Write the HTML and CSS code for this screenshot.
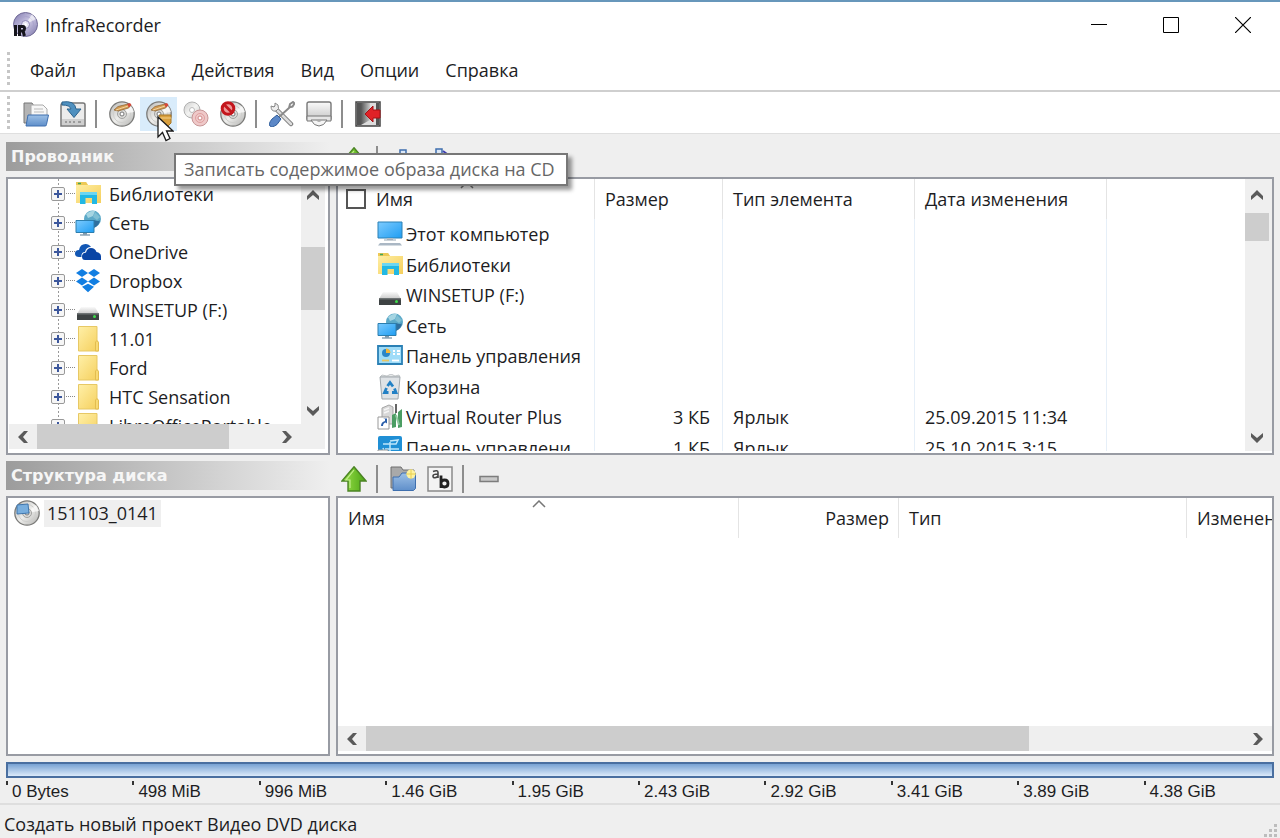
FILE: index.html
```html
<!DOCTYPE html>
<html lang="ru">
<head>
<meta charset="utf-8">
<title>InfraRecorder</title>
<link rel="stylesheet" href="styles.css">
</head>
<body>
<svg class="sprite" aria-hidden="true">
  <defs>
    <linearGradient id="gDisc" x1="0" y1="0" x2="1" y2="1"><stop offset="0" stop-color="#b4b4b2"/><stop offset=".5" stop-color="#eeeeec"/><stop offset="1" stop-color="#b0b0ae"/></linearGradient>
    <linearGradient id="gViolet" x1="0" y1="0" x2="1" y2="1"><stop offset="0" stop-color="#7d76ac"/><stop offset=".5" stop-color="#ccc8e4"/><stop offset="1" stop-color="#7a74a8"/></linearGradient>
    <linearGradient id="gBlue" x1="0" y1="0" x2="0" y2="1"><stop offset="0" stop-color="#9dc0e6"/><stop offset="1" stop-color="#5f8fca"/></linearGradient>
    <linearGradient id="gSky" x1="0" y1="0" x2="1" y2="1"><stop offset="0" stop-color="#7ccbff"/><stop offset="1" stop-color="#1f9df2"/></linearGradient>
    <linearGradient id="gFolder" x1="0" y1="0" x2="1" y2="1"><stop offset="0" stop-color="#fff0a8"/><stop offset="1" stop-color="#f5cf5c"/></linearGradient>
    <linearGradient id="gGreen" x1="0" y1="0" x2="1" y2="0"><stop offset="0" stop-color="#9be04a"/><stop offset="1" stop-color="#4ba514"/></linearGradient>
    <linearGradient id="gGrey" x1="0" y1="0" x2="0" y2="1"><stop offset="0" stop-color="#fafafa"/><stop offset="1" stop-color="#c9c9c9"/></linearGradient>
    <linearGradient id="gDark" x1="0" y1="0" x2="1" y2="0"><stop offset="0" stop-color="#555"/><stop offset="1" stop-color="#c8c8c8"/></linearGradient>
  </defs>
  <symbol id="disc" viewBox="0 0 26 26">
    <circle cx="13" cy="13" r="12.2" fill="url(#gDisc)" stroke="#7b7b79" stroke-width="1.3"/>
    <circle cx="13" cy="13" r="8.6" fill="none" stroke="#cfcfcd"/>
    <path d="M13 13 22 5A12 12 0 0 1 25 11Z" fill="#fff" opacity=".7"/>
    <circle cx="13" cy="13" r="4.500" fill="#dadad8" stroke="#a2a2a0"/>
    <circle cx="13" cy="13" r="2" fill="#fff" stroke="#777"/>
  </symbol>
  <symbol id="pencil" viewBox="0 0 26 26">
    <path d="m5 9 4-3.500L19 3l2.500 1.500-2 2.500L9 10Z" fill="#d29a50" stroke="#946b39" stroke-width=".8"/>
    <path d="m18 3 3-1 1.500 2-2.500 2.500Z" fill="#d6493a"/><path d="M7 9 19 5" stroke="#f3d5a0"/>
  </symbol>
  <symbol id="library" viewBox="0 0 26 26">
    <path d="M1 1h10l2 3h13v18H1Z" fill="url(#gFolder)"/><path d="M1 1h10l2 3H1Z" fill="#edc956"/><path d="M3 2.500h3" stroke="#3fa55b" stroke-width="1.500"/>
    <path d="M5 23V12.500Q5 11 6.500 11h14Q22 11 22 12.500V23h-5v-6h-6.500v6Z" fill="#22b8e4"/><path d="M5 14v-3h17v3Z" fill="#6cd6f1"/>
  </symbol>
  <symbol id="network" viewBox="0 0 26 26">
    <circle cx="17.500" cy="9" r="8.500" fill="#5ba9c8"/><path d="M11 4q5-4 9-3l-2 5-5 2Z" fill="#a5d5e2"/><path d="m20 2 5 5-3 3-4-3Z" fill="#7fbfd4"/><path d="M19 10q5 2 6 0-1 6-6 8Z" fill="#2f6f9f"/>
    <path d="M1 10.500h18v12H1Z" fill="url(#gSky)" stroke="#2c7eae"/><path d="M8 23h4v2H8Z" fill="#7f99ab"/><path d="M5 25h10" stroke="#8da5b6" stroke-width="1.500"/>
  </symbol>
  <symbol id="onedrive" viewBox="0 0 26 26">
    <path d="M4 18Q0 18 0 14.500T4 11Q5 5 10.500 5 14 5 16 8q-5 0-6 5-4 0-3.500 5Z" fill="#1257b4"/>
    <path d="M10 21q-3 0-3-3.500t4-4Q12 9 16 9q4 0 5.500 4 4.500 1 4.500 4.500V21Z" fill="#0a45a5"/>
  </symbol>
  <symbol id="dropbox" viewBox="0 0 26 26">
    <path d="m7 1 6 4-6 4-6-4Zm12 0 6 4-6 4-6-4ZM7 9.500l6 4-6 4-6-4Zm12 0 6 4-6 4-6-4ZM7 18.800l6-3 6 3-6 5.500Z" fill="#117ee2"/>
  </symbol>
  <symbol id="drive" viewBox="0 0 26 26">
    <path d="M6 10h14l4 7H2Z" fill="url(#gGrey)"/><path d="M2 16h22v7H2Z" fill="#3d4243"/><path d="M2 16h22v1.500H2Z" fill="#6e7374"/><circle cx="19.500" cy="19.500" r="1.500" fill="#3edc4b"/>
  </symbol>
  <symbol id="folder" viewBox="0 0 26 26">
    <path d="M3.500.5H22V14.500l1.500 2v8.500H3.500Z" fill="url(#gFolder)" stroke="#e7c865"/><path d="M20.500 25V16l1.500-1.500 1.500 2V25Z" fill="#f8da75" stroke="#e3bd50"/>
  </symbol>
  <symbol id="computer" viewBox="0 0 26 26">
    <path d="M1 1h24v16H1Z" fill="url(#gSky)" stroke="#2a80b5"/><path d="M10 17h6v2h-6Z" fill="#b3bdc5"/><path d="M7 19h12" stroke="#98a6b2"/><path d="M3 22h20l2 2.500H1Z" fill="#aab7c4"/>
  </symbol>
  <symbol id="control" viewBox="0 0 26 26">
    <path d="M1 3h24v18H1Z" fill="#9fdcf8" stroke="#2a80b5" stroke-width="1.800"/><circle cx="9" cy="10" r="4" fill="#2a86c8"/><path d="M9 10V5.500A4.500 4.500 0 0 1 13.500 10Z" fill="#f2b63a"/>
    <path d="M16 8h2m2 0h3m-7 3h2m2 0h3" stroke="#fff" stroke-width="2"/><path d="M5 17.500h7" stroke="#e9c663" stroke-width="1.800"/><path d="M15 17.500h7" stroke="#fff" stroke-width="1.800"/>
  </symbol>
  <symbol id="bin" viewBox="0 0 26 26">
    <path d="m3 3 2-2 5 1 4-2 4 2 4-1 1 2Z" fill="#e7e9ea" stroke="#b4b9bb" stroke-width=".8"/><path d="M3 3h20l-2 22H5Z" fill="#dfe3e6" stroke="#a1a8ad"/>
    <path d="m10.500 12 2.500-3.500 3 4m1.500 2 1.500 4h-4m-3.500 0H7.500l2-4.500" fill="none" stroke="#2381c5" stroke-width="2.800"/>
  </symbol>
  <symbol id="router" viewBox="0 0 26 26">
    <path d="M5 4 12 1l4 2v17H5Z" fill="#d8d8d8" stroke="#a6a6a6"/><path d="M7 6l5-2m-5 5 5-2" stroke="#f5f5f5" stroke-width="1.500"/><path d="M19 0v9" stroke="#555" stroke-width="1.800"/><path d="m15 11 4-2v14l-4 1Zm6-3 4-3v18l-4 1Z" fill="#4b9d63"/><path d="m19 11 3 10" stroke="#8fc9a0" stroke-width="2"/>
    <path d="M1 13h11v12H1Z" fill="#fff" stroke="#999"/><path d="M4 22q0-4 4-5V15l-2-.5h4v5l-1.500-1Q6 19 6 22Z" fill="#2c5faa"/>
  </symbol>
  <symbol id="shortcut" viewBox="0 0 26 26">
    <path d="M3 1h20q2 0 2 2v22H1V3q0-2 2-2Z" fill="#1f8fd5"/><path d="M6 9h13l2-4-8 1M8 14h14m-9-7v10m-7-4 3 8" fill="none" stroke="#bfe6fa" stroke-width="1.500"/><path d="M1 15h10v10H1Z" fill="#fff" stroke="#999"/><path d="M3 21q1-4 5-4v4" fill="none" stroke="#2c5faa" stroke-width="1.500"/>
  </symbol>
  <symbol id="up" viewBox="0 0 26 26">
    <path d="M13 .8 25 15h-6v10H7V15H1Z" fill="url(#gGreen)" stroke="#4b8424" stroke-width="1.400"/><path d="M13 4 5 14h4v8" fill="none" stroke="#c2ee8d" stroke-width="1.200"/>
  </symbol>
  <symbol id="newfolder" viewBox="0 0 26 26">
    <path d="M1 22V1h10l2 3h11v18Z" fill="#a9a9a9" stroke="#6f6f6f"/><path d="M3 24.500V11h6l3-4h13.500v15.500L23.500 24.500Z" fill="url(#gBlue)" stroke="#3f6fae"/><circle cx="21" cy="8" r="4.500" fill="#fff3a0"/><path d="M21 3v10m-5-5h10" stroke="#e8cf50"/>
  </symbol>
  <symbol id="chev" viewBox="0 0 14 14"><path d="M1 8 7 2l6 6v4L7 7l-6 5Z" fill="#5a5a5a"/></symbol>
</svg>

<div class="window">
  <header class="titlebar">
    <svg class="icon" viewBox="0 0 26 26"><circle cx="13.500" cy="12.500" r="12" fill="url(#gViolet)" stroke="#706a96"/><circle cx="13.500" cy="12.500" r="8" fill="none" stroke="#a9a3cc"/><path d="M13.500 12.500 20 2l4 5Z" fill="#fff" opacity=".6"/><circle cx="13.500" cy="12.500" r="4" fill="#e8e6f4" stroke="#8f89b6"/><circle cx="13.500" cy="12.500" r="1.500" fill="#fff"/><path d="M3.500 13v11M7.500 24V14.500h3.500q1.500 0 1.500 2t-1.500 2.500H8.500m2.500 0 1.500 5" fill="none" stroke="#16161c" stroke-width="3"/></svg>
    <h1 class="title">InfraRecorder</h1>
    <div class="controls">
      <button class="control" aria-label="Свернуть"><svg viewBox="0 0 16 16"><path d="M0 7.500h16" stroke="#000"/></svg></button>
      <button class="control" aria-label="Развернуть"><svg viewBox="0 0 16 16"><path d="M.5.500h15v15H.5Z" fill="none" stroke="#000"/></svg></button>
      <button class="control" aria-label="Закрыть"><svg viewBox="0 0 16 16"><path d="m0 0 16 16M16 0 0 16" stroke="#000" stroke-width="1.200"/></svg></button>
    </div>
  </header>

  <nav class="menubar">
    <span class="grip"></span>
    <button class="menu">Файл</button><button class="menu">Правка</button><button class="menu">Действия</button><button class="menu">Вид</button><button class="menu">Опции</button><button class="menu">Справка</button>
  </nav>

  <div class="toolbar main-tools">
    <span class="grip"></span>
    <button class="tool" aria-label="Открыть"><svg class="icon" viewBox="0 0 26 26"><path d="M1 22V2h8l2 3h7v17Z" fill="#b4b4b4" stroke="#777"/><path d="M8 4h12l4 4v10H8Z" fill="#f7f7f7" stroke="#aaa"/><path d="M11 8h9m-9 3h10" stroke="#bbb"/><path d="M5 14h20.500l-2 9.500Q23.500 25 22 25H3Z" fill="url(#gBlue)" stroke="#3f6fae"/></svg></button>
    <button class="tool" aria-label="Сохранить"><svg class="icon" viewBox="0 0 26 26"><path d="M1 25V5Q1 2 3 2h20q2 0 2 2v21Z" fill="#ececec" stroke="#777" stroke-width="1.500"/><path d="M2 18h22v6H2Z" fill="#cfcfcf"/><path d="M5 21h2m2 0h2m2 0h2m3 0h3" stroke="#8a8a8a" stroke-width="1.500"/><path d="M2 1q13-2 14 7h5l-7 8.500L7 8h4Q10 4 2 4Z" fill="#4f90bf" stroke="#2d648e"/></svg></button>
    <span class="sep"></span>
    <button class="tool" aria-label="Записать проект"><svg class="icon" viewBox="0 0 26 26"><use href="#disc"/><use href="#pencil"/></svg></button>
    <button class="tool active" aria-label="Записать образ" aria-describedby="tip"><svg class="icon" viewBox="0 0 26 26"><use href="#disc"/><use href="#pencil"/><path d="M13 14h12v8l-3 3h-4Z" fill="#d9a03f" stroke="#a87624"/><path d="M14 17h11" stroke="#f4d08a"/></svg></button>
    <button class="tool" aria-label="Копировать диск"><svg class="icon" viewBox="0 0 26 26"><g opacity=".65"><circle cx="9" cy="9" r="8" fill="url(#gDisc)" stroke="#888"/><circle cx="9" cy="9" r="2.500" fill="#fff" stroke="#999"/></g><circle cx="17" cy="17" r="8" fill="#efc9c9" stroke="#c79696"/><circle cx="17" cy="17" r="4.500" fill="none" stroke="#e09f9f"/><circle cx="17" cy="17" r="2" fill="#fff" stroke="#d08888"/></svg></button>
    <button class="tool" aria-label="Стереть диск"><svg class="icon" viewBox="0 0 26 26"><use href="#disc"/><circle cx="8" cy="7.500" r="5.800" fill="#e99" stroke="#c4161c" stroke-width="3"/><path d="m4.500 4 7 7" stroke="#c4161c" stroke-width="2.800"/></svg></button>
    <span class="sep"></span>
    <button class="tool" aria-label="Настройки"><svg class="icon" viewBox="0 0 26 26"><path d="m6 7 16 16" stroke="#777" stroke-width="4.500" stroke-linecap="round"/><path d="m6 7 16 16" stroke="#ddd" stroke-width="2.500" stroke-linecap="round"/><path d="M2 5q0 6 5 5 4-2 2-6L6 2v3L5 6Z" fill="#eee" stroke="#888"/><path d="m10 16 10-9 1-4 3-2 1.500 1.500-2 3-4 1" fill="none" stroke="#8a8a8a" stroke-width="2"/><path d="M3 18 8 14l4 4-4 5.500Q3 27 1 25T3 18Z" fill="#5c88c7" stroke="#2e5c9b"/></svg></button>
    <button class="tool" aria-label="Извлечь"><svg class="icon" viewBox="0 0 26 26"><path d="M3 1h20q2 0 2 2v15H1V3q0-2 2-2Z" fill="url(#gGrey)" stroke="#777" stroke-width="1.400"/><path d="M1 15h24v5H1Z" fill="#e5e5e5" stroke="#777"/><path d="M5 19q3 6 8 6t8-6Z" fill="#f5f5f5" stroke="#777"/><path d="M10 19q3 4 6 0Z" fill="#aaa"/></svg></button>
    <span class="sep"></span>
    <button class="tool" aria-label="Выход"><svg class="icon" viewBox="0 0 26 26"><path d="M1 1h24v24H1Z" fill="#ddd" stroke="#444" stroke-width="1.500"/><path d="M2 2h4v22H2Z" fill="#555"/><path d="M6 2h9v17l-9 5Z" fill="url(#gDark)"/><path d="M21 2h3v22h-3Z" fill="#555"/><path d="m10 13 8-8v4h7v8h-7v4Z" fill="#e02227" stroke="#a51015"/></svg></button>
  </div>

  <main class="panes">
    <h2 class="caption">Проводник</h2>
    <div class="toolbar">
      <button class="tool" aria-label="Вверх"><svg class="icon"><use href="#up"/></svg></button>
      <span class="sep"></span>
      <button class="tool" aria-label="Добавить"><svg class="icon" viewBox="0 0 26 26"><path d="M10 3h6v20h-6Z" fill="#dce8f7" stroke="#3f6fae" stroke-width="1.500"/></svg></button>
      <button class="tool" aria-label="Добавить всё"><svg class="icon" viewBox="0 0 26 26"><path d="M9 2h6v20H9Z" fill="#dce8f7" stroke="#3f6fae" stroke-width="1.500"/><path d="m16 4 4 3v4" fill="none" stroke="#3f3fae" stroke-width="2"/></svg></button>
    </div>

    <section class="pane explorer">
      <ul class="tree">
        <li><button class="expand" aria-label="Раскрыть"></button><svg class="icon"><use href="#library"/></svg><span>Библиотеки</span></li>
        <li><button class="expand" aria-label="Раскрыть"></button><svg class="icon"><use href="#network"/></svg><span>Сеть</span></li>
        <li><button class="expand" aria-label="Раскрыть"></button><svg class="icon"><use href="#onedrive"/></svg><span>OneDrive</span></li>
        <li><button class="expand" aria-label="Раскрыть"></button><svg class="icon"><use href="#dropbox"/></svg><span>Dropbox</span></li>
        <li><button class="expand" aria-label="Раскрыть"></button><svg class="icon"><use href="#drive"/></svg><span>WINSETUP (F:)</span></li>
        <li><button class="expand" aria-label="Раскрыть"></button><svg class="icon"><use href="#folder"/></svg><span>11.01</span></li>
        <li><button class="expand" aria-label="Раскрыть"></button><svg class="icon"><use href="#folder"/></svg><span>Ford</span></li>
        <li><button class="expand" aria-label="Раскрыть"></button><svg class="icon"><use href="#folder"/></svg><span>HTC Sensation</span></li>
        <li><button class="expand" aria-label="Раскрыть"></button><svg class="icon"><use href="#folder"/></svg><span>LibreOfficePortable</span></li>
      </ul>
      <div class="vbar tree-v"><button aria-label="Вверх"><svg class="chev"><use href="#chev"/></svg></button><span class="track"><span class="thumb"></span></span><button aria-label="Вниз"><svg class="chev down"><use href="#chev"/></svg></button></div>
      <div class="hbar tree-h"><button aria-label="Влево"><svg class="chev left"><use href="#chev"/></svg></button><span class="track"><span class="thumb"></span></span><button aria-label="Вправо"><svg class="chev right"><use href="#chev"/></svg></button></div>
    </section>

    <section class="pane files">
      <div class="clip">
        <table class="list">
          <colgroup><col class="c-name"><col class="c-size"><col class="c-type"><col class="c-date"><col></colgroup>
          <thead><tr><th class="check"><label><input type="checkbox">Имя</label><svg class="sort" viewBox="0 0 14 8"><path d="m1 7 6-6 6 6" fill="none" stroke="#777" stroke-width="1.500"/></svg></th><th>Размер</th><th>Тип элемента</th><th>Дата изменения</th><th></th></tr></thead>
          <tbody>
            <tr><td><span class="name"><svg class="icon"><use href="#computer"/></svg>Этот компьютер</span></td><td></td><td></td><td></td><td></td></tr>
            <tr><td><span class="name"><svg class="icon"><use href="#library"/></svg>Библиотеки</span></td><td></td><td></td><td></td><td></td></tr>
            <tr><td><span class="name"><svg class="icon"><use href="#drive"/></svg>WINSETUP (F:)</span></td><td></td><td></td><td></td><td></td></tr>
            <tr><td><span class="name"><svg class="icon"><use href="#network"/></svg>Сеть</span></td><td></td><td></td><td></td><td></td></tr>
            <tr><td><span class="name"><svg class="icon"><use href="#control"/></svg>Панель управления</span></td><td></td><td></td><td></td><td></td></tr>
            <tr><td><span class="name"><svg class="icon"><use href="#bin"/></svg>Корзина</span></td><td></td><td></td><td></td><td></td></tr>
            <tr><td><span class="name"><svg class="icon"><use href="#router"/></svg>Virtual Router Plus</span></td><td>3 КБ</td><td>Ярлык</td><td>25.09.2015 11:34</td><td></td></tr>
            <tr><td><span class="name"><svg class="icon"><use href="#shortcut"/></svg>Панель управлени</span></td><td>1 КБ</td><td>Ярлык</td><td>25.10.2015 3:15</td><td></td></tr>
          </tbody>
        </table>
      </div>
      <div class="vbar files-v"><button aria-label="Вверх"><svg class="chev"><use href="#chev"/></svg></button><span class="track"><span class="thumb"></span></span><button aria-label="Вниз"><svg class="chev down"><use href="#chev"/></svg></button></div>
    </section>

    <h2 class="caption">Структура диска</h2>
    <div class="toolbar">
      <button class="tool" aria-label="Вверх"><svg class="icon"><use href="#up"/></svg></button>
      <span class="sep"></span>
      <button class="tool" aria-label="Новая папка"><svg class="icon"><use href="#newfolder"/></svg></button>
      <button class="tool" aria-label="Переименовать"><svg class="icon" viewBox="0 0 26 26"><path d="M1 1h24v24H1Z" fill="#f3f3f3" stroke="#8a8a8a" stroke-width="1.500"/><path d="M6 5.500q5-2 5 1V12M11 8q-5 0-5 2t2 1.800T11 10" fill="none" stroke="#444" stroke-width="1.600"/><path d="M14 9.500V22M14 17q0-3 3.500-3t3.500 3.500T17.500 21 14 17.500" fill="none" stroke="#222" stroke-width="2.800"/></svg></button>
      <span class="sep"></span>
      <button class="tool" aria-label="Удалить"><svg class="icon" viewBox="0 0 26 26"><path d="M4 10.500h18v5H4Z" fill="#c9c9c9" stroke="#7d7d7d" stroke-width="1.500"/></svg></button>
    </div>

    <section class="pane disc-tree">
      <svg class="icon" viewBox="0 0 26 26"><use href="#disc"/><path d="M3 5l11-1 1 9-12 1Z" fill="#78aede" stroke="#3f76ad"/></svg>
      <span class="selected">151103_0141</span>
    </section>

    <section class="pane disc-files">
      <table class="list">
        <colgroup><col class="d-name"><col class="d-size"><col class="d-type"><col></colgroup>
        <thead><tr><th>Имя<svg class="sort" viewBox="0 0 14 8"><path d="m1 7 6-6 6 6" fill="none" stroke="#777" stroke-width="1.500"/></svg></th><th class="right">Размер</th><th>Тип</th><th>Изменен</th></tr></thead>
      </table>
      <div class="hbar disc-h"><button aria-label="Влево"><svg class="chev left"><use href="#chev"/></svg></button><span class="track"><span class="thumb"></span></span><button aria-label="Вправо"><svg class="chev right"><use href="#chev"/></svg></button></div>
    </section>
  </main>

  <section class="usage">
    <div class="meter"></div>
    <ol class="ruler"><li>0 Bytes</li><li>498 MiB</li><li>996 MiB</li><li>1.46 GiB</li><li>1.95 GiB</li><li>2.43 GiB</li><li>2.92 GiB</li><li>3.41 GiB</li><li>3.89 GiB</li><li>4.38 GiB</li></ol>
  </section>

  <footer class="status"><span>Создать новый проект Видео DVD диска</span>
    <svg class="size-grip" viewBox="0 0 14 14"><path d="M10 0h3v3h-3zM5 5h3v3H5zM10 5h3v3h-3zM0 10h3v3H0zM5 10h3v3H5zM10 10h3v3h-3z" fill="#bdbdbd"/></svg>
  </footer>

  <div class="tooltip" id="tip" role="tooltip">Записать содержимое образа диска на CD</div>
  <svg class="cursor" viewBox="0 0 17 26"><path d="M1 1v20l4.500-4.500 3.500 8 4-2-3.500-7.500H16Z" fill="#fff" stroke="#1a1a1a" stroke-width="1.300"/></svg>
</div>
</body>
</html>
```
FILE: styles.css
```css
* { box-sizing: border-box; }

body {
  margin: 0;
  background: #efefef;
  color: #1d1d1f;
  font: 18px/24px "Open Sans", "Noto Sans", sans-serif;
}

button {
  padding: 0;
  border: 0;
  background: none;
  color: inherit;
  font: inherit;
}

h1, h2, ul, ol { margin: 0; padding: 0; }
ul, ol { list-style: none; }

.sprite { position: absolute; width: 0; height: 0; }
.icon { flex: none; display: block; width: 26px; height: 26px; }

.window {
  position: relative;
  display: flex;
  flex-direction: column;
  min-height: 100vh;
  overflow: hidden;
  border-top: 2px solid #6797bb;
}

.titlebar {
  display: flex;
  align-items: center;
  height: 46px;
  padding-left: 12px;
  background: #fff;
}
.title { margin-left: 7px; font-size: 18px; font-weight: 400; }
.controls { display: flex; margin-left: auto; padding-right: 1px; }
.control { display: grid; place-items: center; width: 72px; height: 44px; }
.control svg { width: 16px; height: 16px; }

.menubar {
  display: flex;
  align-items: center;
  height: 44px;
  padding-top: 2px;
  background: #fff;
  border-bottom: 2px solid #cfcfcf;
}
.menu { margin-left: 26px; }
.menubar .grip + .menu { margin-left: 20px; }

.grip {
  width: 3px;
  height: 36px;
  margin-left: 7px;
  background: repeating-linear-gradient(#c6c6c6 0 3px, #fff 3px 6px);
}

.toolbar { display: flex; align-items: center; }
.main-tools { height: 42px; padding-top: 2px; background: #fff; border-bottom: 1px solid #dfdfdf; }
.main-tools .grip + .tool { margin-left: 7px; }
.tool { display: grid; place-items: center; width: 37px; height: 34px; }
.tool.active { background: #d9ecfb; }
.sep { width: 12px; height: 28px; border-left: 4px solid transparent; }
.sep::before { content: ""; display: block; width: 2px; height: 28px; background: #8d8d8d; }

.panes {
  flex: 1;
  display: grid;
  grid-template-columns: 324px minmax(0, 1fr);
  grid-template-rows: 35px 278px 41px minmax(200px, 1fr);
  column-gap: 6px;
  padding: 8px 6px 6px;
}
.panes .toolbar { height: 35px; margin-left: -1px; align-self: end; }
.panes .caption:nth-of-type(2) { margin-top: 6px; }

.caption {
  height: 29px;
  padding-left: 5px;
  background: linear-gradient(90deg, #9c9c9c, #efefef);
  color: #f6f6f6;
  font: bold 16px/29px "DejaVu Sans", sans-serif;
}

.pane {
  min-width: 0;
  overflow: hidden;
  background: #fff;
  border: 2px solid #989ba3;
}

.explorer {
  display: grid;
  grid-template-columns: minmax(0, 1fr) 24px;
  grid-template-rows: minmax(0, 1fr) 25px;
  padding: 0 3px 4px 1px;
}
.tree {
  overflow: hidden;
  padding-left: 42px;
  background: linear-gradient(#999 50%, transparent 50%) 49px 0 / 1px 4px repeat-y;
}
.tree li { display: flex; align-items: center; height: 29px; }
.tree span { margin-left: 8px; white-space: nowrap; }
.tree .icon { margin-left: 10px; }
.expand {
  position: relative;
  flex: none;
  width: 14px;
  height: 14px;
  border: 1px solid #999;
  border-radius: 2px;
  background:
    linear-gradient(#3c579c, #3c579c) center / 8px 2px no-repeat,
    linear-gradient(#3c579c, #3c579c) center / 2px 8px no-repeat,
    #f6f6f6;
}
.expand::after {
  content: "";
  position: absolute;
  left: 14px;
  top: 5px;
  width: 9px;
  border-top: 1px dotted #888;
}

.vbar, .hbar { display: flex; background: #efefef; }
.vbar { flex-direction: column; grid-row: 1 / span 2; grid-column: 2; }
.hbar { height: 25px; }
.track { display: flex; flex: 1; min-width: 0; min-height: 0; }
.vbar .track { flex-direction: column; }
.thumb { background: #cdcdcd; }
.vbar button { display: grid; place-items: center; height: 32px; }
.hbar button { display: grid; place-items: center; width: 28px; }
.chev { width: 14px; height: 14px; }
.chev.down { transform: rotate(180deg); }
.chev.left { transform: rotate(-90deg); }
.chev.right { transform: rotate(90deg); }
.tree-v { padding-bottom: 22px; }
.tree-v .thumb { height: 63px; margin-top: 36px; }
.tree-h .thumb { width: 192px; }

.files { display: grid; grid-template-columns: minmax(0, 1fr) 27px; padding-bottom: 2px; }
.clip { overflow: hidden; min-height: 0; height: 272px; }
.files-v { padding-right: 3px; }
.files-v .thumb { height: 28px; margin-top: 2px; }
.vbar.files-v { height: 272px; grid-row: 1; }
.files-v button:last-child { height: 26px; }

.list { width: 100%; table-layout: fixed; border-collapse: separate; border-spacing: 0; }
.c-name { width: 257px; }
.c-size { width: 128px; }
.c-type, .c-date { width: 192px; }
.list th {
  position: relative;
  height: 40px;
  padding: 0 10px;
  border-right: 1px solid #e4e4e4;
  font-weight: 400;
  text-align: left;
  white-space: nowrap;
}
.list td {
  height: 30px;
  padding: 0 10px;
  border-right: 1px solid #e6eff8;
  white-space: nowrap;
}
.list tr:nth-child(even) td { height: 31px; }
.list th:last-child, .list td:last-child { border-right: 0; }
.list td:first-child { padding: 0 0 0 39px; }
.list td:nth-child(2) { padding-right: 12px; text-align: right; }
.list th.right { padding-right: 9px; text-align: right; }
.list th.check { padding-left: 8px; }
.check label { display: flex; align-items: center; gap: 10px; }
.check input {
  appearance: none;
  width: 20px;
  height: 20px;
  margin: 0;
  border: 2px solid #555;
  background: #fff;
}
.name { display: flex; align-items: center; gap: 3px; }
.sort { position: absolute; top: 2px; left: calc(50% - 6px); width: 14px; height: 8px; }

.disc-tree { display: flex; align-items: flex-start; gap: 4px; padding: 2px 6px; }
.selected { padding: 1px 3px 2px; background: #efefef; }

.disc-files { display: flex; flex-direction: column; justify-content: space-between; padding-bottom: 3px; }
.d-name { width: 401px; }
.d-size { width: 160px; }
.d-type { width: 288px; }
.disc-files th:last-child { padding-right: 0; overflow: hidden; }
.disc-h .thumb { width: 75.5%; }

.usage { padding: 0 6px; }
.meter {
  height: 16px;
  border: 2px solid #4a6fa0;
  background: linear-gradient(#78a2d3, #dceafa);
}
.ruler { display: grid; grid-template-columns: repeat(10, 1fr); padding: 2px 4px 0 0; }
.ruler li {
  height: 23px;
  padding-left: 6px;
  background: linear-gradient(#333, #333) 0 1px / 2px 4px no-repeat;
  font: 17px/24px "Liberation Sans", sans-serif;
  white-space: nowrap;
}

.status {
  display: flex;
  justify-content: space-between;
  align-items: center;
  height: 35px;
  padding: 4px 2px 0 4px;
  border-top: 2px solid #dedede;
}
.size-grip { align-self: flex-end; width: 14px; height: 14px; }

.tooltip {
  position: absolute;
  left: 174px;
  top: 151px;
  padding: 2px 11px 3px 8px;
  border: 2px solid #777;
  background: #fff;
  color: #666;
  box-shadow: 4px 4px 4px rgba(0, 0, 0, .4);
  white-space: nowrap;
}
.cursor { position: absolute; left: 157px; top: 114px; width: 17px; height: 26px; }
```
